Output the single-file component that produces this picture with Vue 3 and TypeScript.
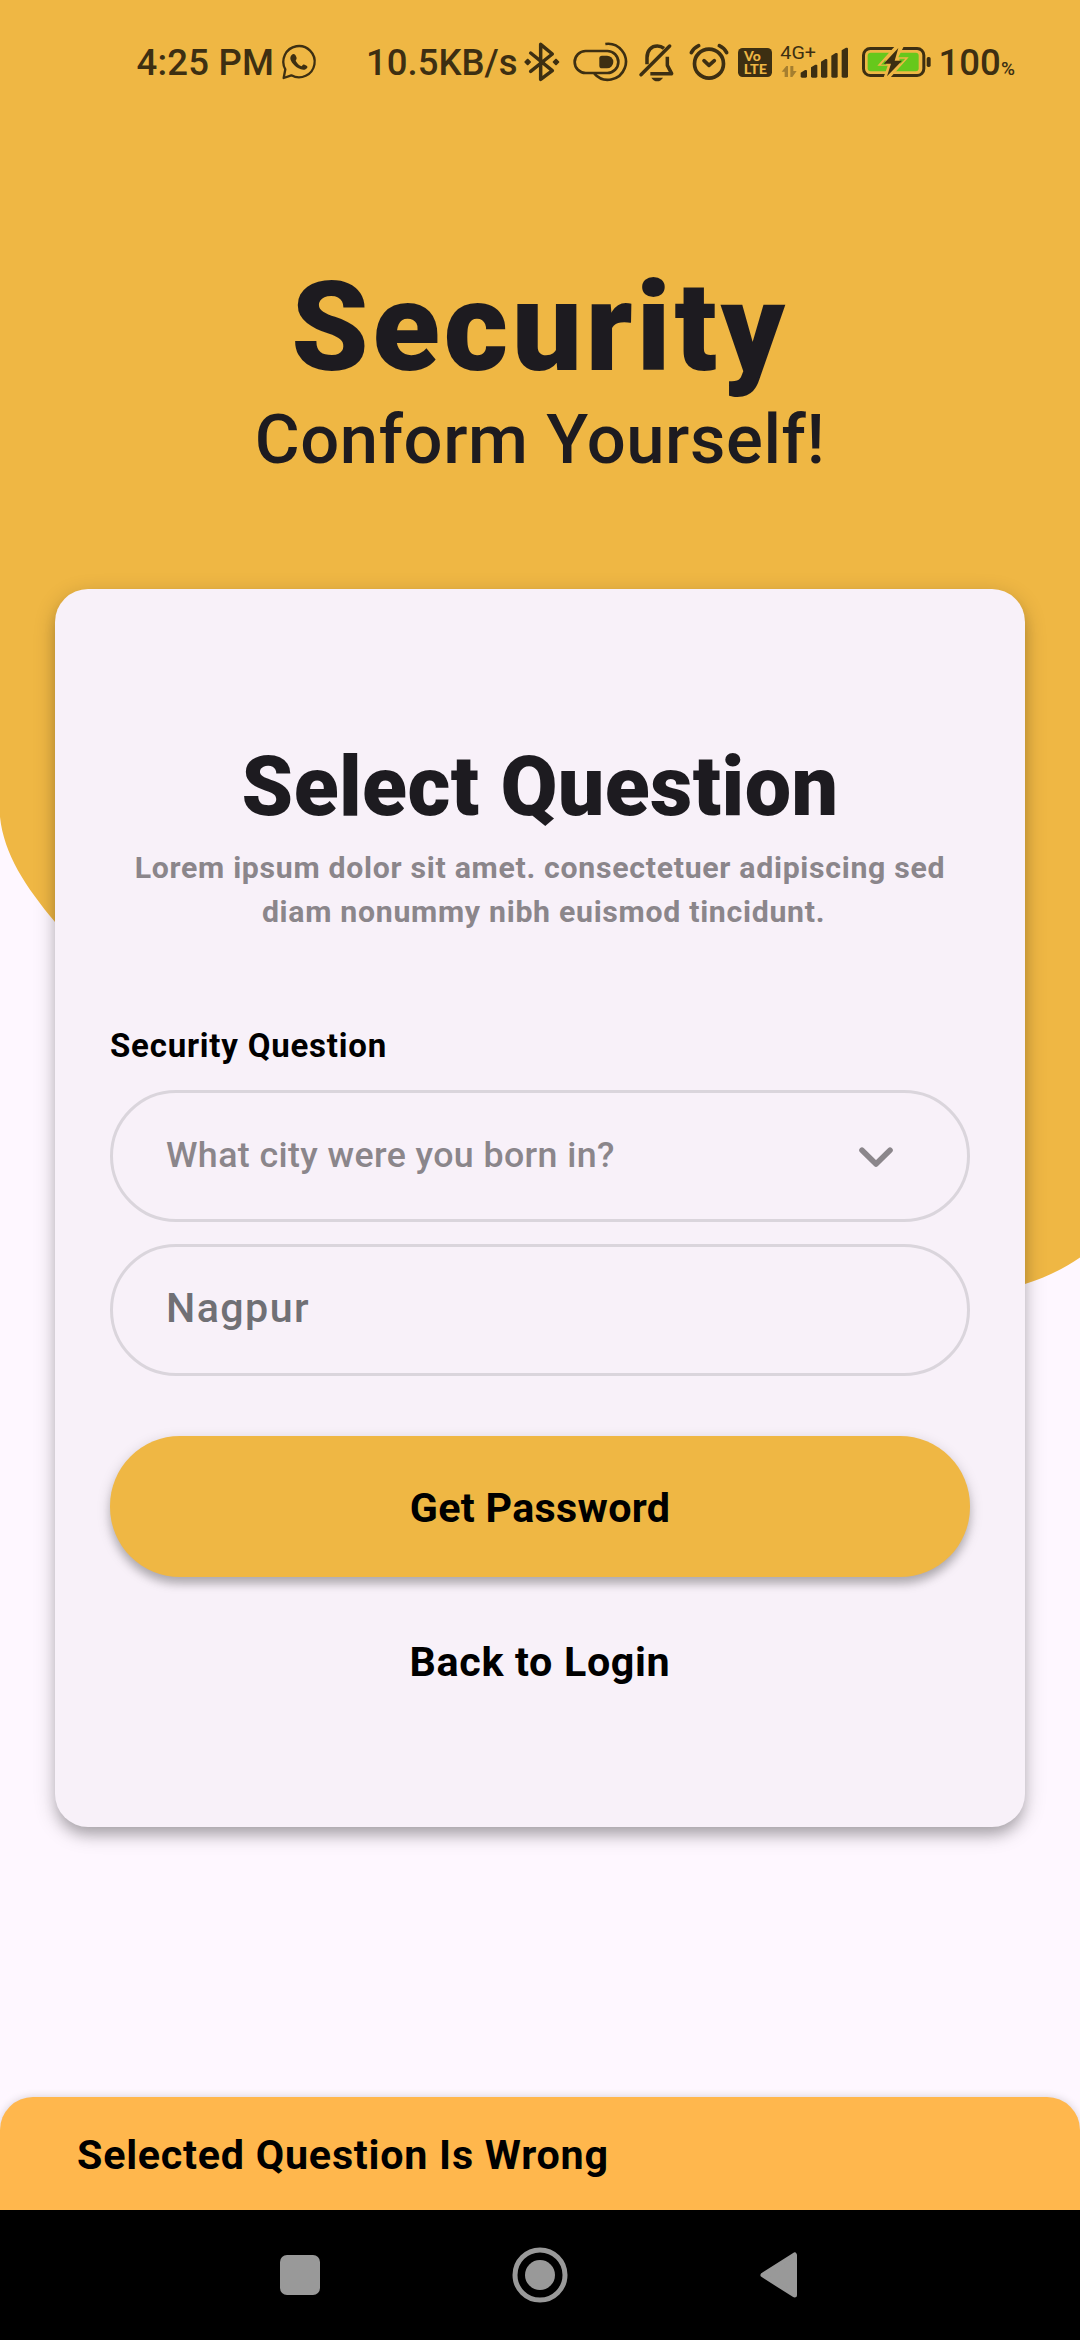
<script setup lang="ts">
import { ref } from 'vue'

const question = ref('What city were you born in?')
const answer = ref('Nagpur')
const bars = [
  { x: 512, y: 120 },
  { x: 543, y: 104 },
  { x: 573, y: 87 },
  { x: 604, y: 69 },
  { x: 635, y: 53 },
]
</script>

<template>
  <div class="screen">
    <svg class="blob" viewBox="0 0 1080 1300" aria-hidden="true">
      <path d="M0 0H1080V1257.500C1063 1269 1045 1278 1025 1284C760 1360 700 1010 420 1060C240 1090 130 1015 55 922C25 886 4 854 0 817Z" fill="#efb744" />
    </svg>

    <header class="status">
      <span class="time">4:25 PM</span>
      <svg class="ic whatsapp" width="40" height="70" viewBox="480 0 120 210" fill="none" stroke="#3d2f12">
        <path d="M491 144L496 118A47 47 0 1 1 514 136Z" stroke-width="7" stroke-linejoin="round" />
        <path d="M515 75C520 70 525 72 528 79C532 86 529 88 527 92C531 100 537 106 545 109C549 104 551 102 557 106C564 109 564 113 558 117C548 124 532 115 523 106C512 94 507 83 515 75Z" fill="#3d2f12" stroke="none" />
      </svg>
      <span class="speed">10.5KB/s</span>
      <svg class="ic bluetooth" width="40" height="70" viewBox="517 0 120 210" fill="none" stroke="#3d2f12">
        <path d="M543 69L608 122L573 148V43L608 72L543 124" stroke-width="10.500" stroke-linejoin="round" stroke-linecap="round" />
        <path d="M534 88L542 96L534 104L526 96ZM619 88L627 96L619 104L611 96Z" fill="#3d2f12" stroke-width="4" stroke-linejoin="round" />
      </svg>
      <svg class="ic toggle" width="56" height="70" viewBox="665 0 168 210" fill="none" stroke="#3d2f12" stroke-width="8">
        <rect x="673" y="63" width="131" height="66" rx="33" />
        <path d="M765 42A54 54 0 1 1 732 131" />
        <path d="M755 77H770A19 19 0 0 1 770 115H755Q747 115 747 107V85Q747 77 755 77Z" fill="#3d2f12" stroke="none" />
      </svg>
      <svg class="ic bell" width="40" height="70" viewBox="22 0 120 210" fill="none" stroke="#3d2f12" stroke-width="10.500">
        <path d="M34 134L120 48" stroke-linecap="round" />
        <path d="M52 103V83C52 60 66 48 83 48C92 48 98 51 103 55" />
        <path d="M113 80V106L126 131H62" stroke-linejoin="round" />
        <path d="M65 143H100Q93 154 83 154Q72 154 65 143Z" fill="#3d2f12" stroke="none" />
      </svg>
      <svg class="ic alarm" width="44" height="70" viewBox="170 0 132 210" fill="none" stroke="#3d2f12" stroke-width="11" stroke-linecap="round">
        <circle cx="236" cy="101" r="43.500" />
        <path d="M183 68Q190 54 205 47M267 47Q282 54 289 68" />
        <path d="M221 92L236 106L252 92" stroke-linejoin="round" />
      </svg>
      <svg class="ic volte" width="36" height="70" viewBox="321 0 108 210">
        <rect x="324" y="54" width="102" height="87" rx="14" fill="#3d2f12" />
        <g class="lte">
          <text x="342" y="93" textLength="50" lengthAdjust="spacingAndGlyphs">Vo</text>
          <text x="341" y="131" textLength="70" lengthAdjust="spacingAndGlyphs">LTE</text>
        </g>
      </svg>
      <svg class="ic signal" width="72" height="70" viewBox="447 0 216 210">
        <text class="net" x="451" y="86" textLength="107" lengthAdjust="spacingAndGlyphs">4G+</text>
        <path d="M455 125L469 108H474V141H464V125ZM500 123L487 141H481V108H490V123Z" fill="#3d2f12" opacity=".42" />
        <path v-for="b in bars" :key="b.x" :d="`M${b.x} ${b.y + 8}L${b.x + 13} ${b.y}H${b.x + 16}Q${b.x + 19} ${b.y} ${b.x + 19} ${b.y + 3}V139Q${b.x + 19} 143 ${b.x + 15} 143H${b.x + 4}Q${b.x} 143 ${b.x} 139Z`" fill="#3d2f12" />
      </svg>
      <svg class="ic battery" width="72" height="70" viewBox="60 0 216 210" fill="none">
        <rect x="70.500" y="55.500" width="181" height="81" rx="20" stroke="#3d2f12" stroke-width="9" />
        <rect x="83" y="68" width="153" height="56" rx="9" fill="#66c81c" />
        <path d="M168 45L112 107H143L129 148L150 144L206 82H175L192 48Z" fill="#efb744" />
        <path d="M123 104L136 89L139 104ZM178 86H196L181 102Z" fill="#66c81c" />
        <path d="M175 54L131 101H153L141 139L186 92H164Z" fill="#3d2f12" />
        <rect x="260" y="81" width="12" height="30" rx="5" fill="#3d2f12" />
      </svg>
      <span class="level">100</span><span class="pct">%</span>
    </header>

    <section class="intro">
      <h1>Security</h1>
      <p>Conform Yourself!</p>
    </section>

    <main class="card">
      <h2>Select Question</h2>
      <p class="hint">Lorem ipsum dolor sit amet. consectetuer adipiscing sed<br /><span class="second">diam nonummy nibh euismod tincidunt.</span></p>
      <div class="label">Security Question</div>
      <div class="field select">
        <span>{{ question }}</span>
        <svg width="34" height="22" viewBox="0 0 34 22" fill="none">
          <path d="M3 3.300L17 17L31 3.300" stroke="#8b868b" stroke-width="5.600" stroke-linecap="round" stroke-linejoin="round" />
        </svg>
      </div>
      <div class="field answer"><span>{{ answer }}</span></div>
      <button class="primary" type="button">Get Password</button>
      <a class="back">Back to Login</a>
    </main>

    <div class="snack">Selected Question Is Wrong</div>

    <nav class="nav">
      <svg width="40" height="40" viewBox="0 0 40 40"><rect width="40" height="40" rx="7" fill="#999" /></svg>
      <svg width="56" height="56" viewBox="0 0 56 56">
        <circle cx="28" cy="28" r="25" fill="none" stroke="#999" stroke-width="5" />
        <circle cx="28" cy="28" r="15" fill="#999" />
      </svg>
      <svg width="38" height="46" viewBox="0 0 38 46">
        <path d="M3 23L34.500 3V43Z" fill="#999" stroke="#999" stroke-width="5" stroke-linejoin="round" />
      </svg>
    </nav>
  </div>
</template>

<style>
body { margin: 0; }
</style>

<style scoped>
.screen {
  position: relative;
  isolation: isolate;
  display: flex;
  flex-direction: column;
  width: 1080px;
  height: 2340px;
  overflow: hidden;
  background: #fef7ff;
  color: #1d1b20;
  font-family: Roboto, "Noto Sans", sans-serif;
}
.blob {
  position: absolute;
  z-index: -1;
  top: 0;
  left: 0;
  width: 1080px;
  height: 1300px;
}
h1, h2, p { margin: 0; }
.status {
  display: flex;
  flex: none;
  height: 70px;
  padding: 30px 0 0 136.500px;
  color: #3d2f12;
  font-size: 36.500px;
  line-height: 66px;
  white-space: nowrap;
}
.status > * { flex: none; }
.time { width: 143.500px; font-weight: 500; letter-spacing: .2px; }
.speed { width: 155px; margin-left: 46px; font-weight: 500; }
.bluetooth { margin-left: 1px; }
.toggle { margin-left: 9.500px; }
.bell { margin-left: 9.500px; }
.alarm { margin-left: 9.500px; margin-right: 6px; }
.signal { margin-left: 6px; }
.battery { margin-left: 9px; }
.level { width: 62.500px; margin-left: 7px; font-weight: 500; }
.pct { font-size: 19px; font-weight: 500; line-height: 77px; }
.lte {
  fill: #efb744;
  font-family: Lato, sans-serif;
  font-size: 39px;
  font-weight: 900;
}
.net { fill: #3d2f12; font-size: 57px; }
.intro {
  flex: none;
  height: 334px;
  padding-top: 155px;
  text-align: center;
}
.intro h1 {
  font-size: 123.750px;
  font-weight: 900;
  line-height: 145px;
  letter-spacing: 3.850px;
}
.intro p {
  margin-top: -1px;
  font-size: 68.750px;
  font-weight: 500;
  line-height: 81px;
  letter-spacing: .6px;
}
.card {
  display: flex;
  flex: none;
  flex-direction: column;
  box-sizing: border-box;
  width: 970px;
  height: 1238px;
  margin: 0 55px;
  padding: 149px 55px 0;
  border-radius: 33px;
  background: #f8f1f9;
  box-shadow: 0 10px 14px -3px rgba(0, 0, 0, .22), 0 6px 22px rgba(0, 0, 0, .2);
}
.card h2 {
  font-size: 82.500px;
  font-weight: 900;
  line-height: 97px;
  letter-spacing: .4px;
  text-align: center;
  white-space: nowrap;
}
.hint {
  margin-top: 11px;
  color: #8b868b;
  font-size: 30.250px;
  font-weight: 700;
  line-height: 43.500px;
  letter-spacing: .7px;
  text-align: center;
  white-space: nowrap;
}
.second { padding-left: 7px; }
.label {
  margin-top: 89px;
  color: #000;
  font-size: 33px;
  font-weight: 700;
  line-height: 47px;
  letter-spacing: .78px;
}
.field {
  display: flex;
  align-items: center;
  justify-content: space-between;
  box-sizing: border-box;
  height: 132px;
  padding: 0 74px 0 53px;
  border: 3px solid #dad5dc;
  border-radius: 66px;
}
.select {
  margin-top: 21px;
  color: #8b868b;
  font-size: 35.750px;
  font-weight: 500;
  letter-spacing: .4px;
}
.select span { margin-top: -2px; }
.select svg { margin-top: 3px; }
.answer {
  margin-top: 22px;
  color: #707075;
  font-size: 41.250px;
  font-weight: 500;
  letter-spacing: 1.400px;
}
.answer span { margin-top: -5px; }
.primary {
  height: 141px;
  margin-top: 60px;
  padding: 0;
  border: 0;
  border-radius: 70px;
  background: #efb744;
  box-shadow: 0 8px 9px -1px rgba(0, 0, 0, .18), 0 4px 14px rgba(0, 0, 0, .18);
  color: #000;
  font: 700 41.250px/145px Roboto, sans-serif;
  letter-spacing: .3px;
}
.back {
  margin-top: 58px;
  color: #000;
  font-size: 41.250px;
  font-weight: 700;
  line-height: 55px;
  letter-spacing: .65px;
  text-align: center;
}
.snack {
  box-sizing: border-box;
  flex: none;
  height: 113px;
  margin-top: auto;
  padding-left: 77px;
  border-radius: 33px 33px 0 0;
  background: #ffb74d;
  box-shadow: 0 0 8px rgba(0, 0, 0, .16);
  color: #000;
  font-size: 41.250px;
  font-weight: 700;
  line-height: 116px;
  letter-spacing: .75px;
}
.nav {
  display: flex;
  flex: none;
  align-items: center;
  height: 130px;
  padding-left: 280px;
  background: #000;
}
.nav svg:nth-child(2) { margin-left: 192px; }
.nav svg:nth-child(3) { margin-left: 192px; }
</style>
